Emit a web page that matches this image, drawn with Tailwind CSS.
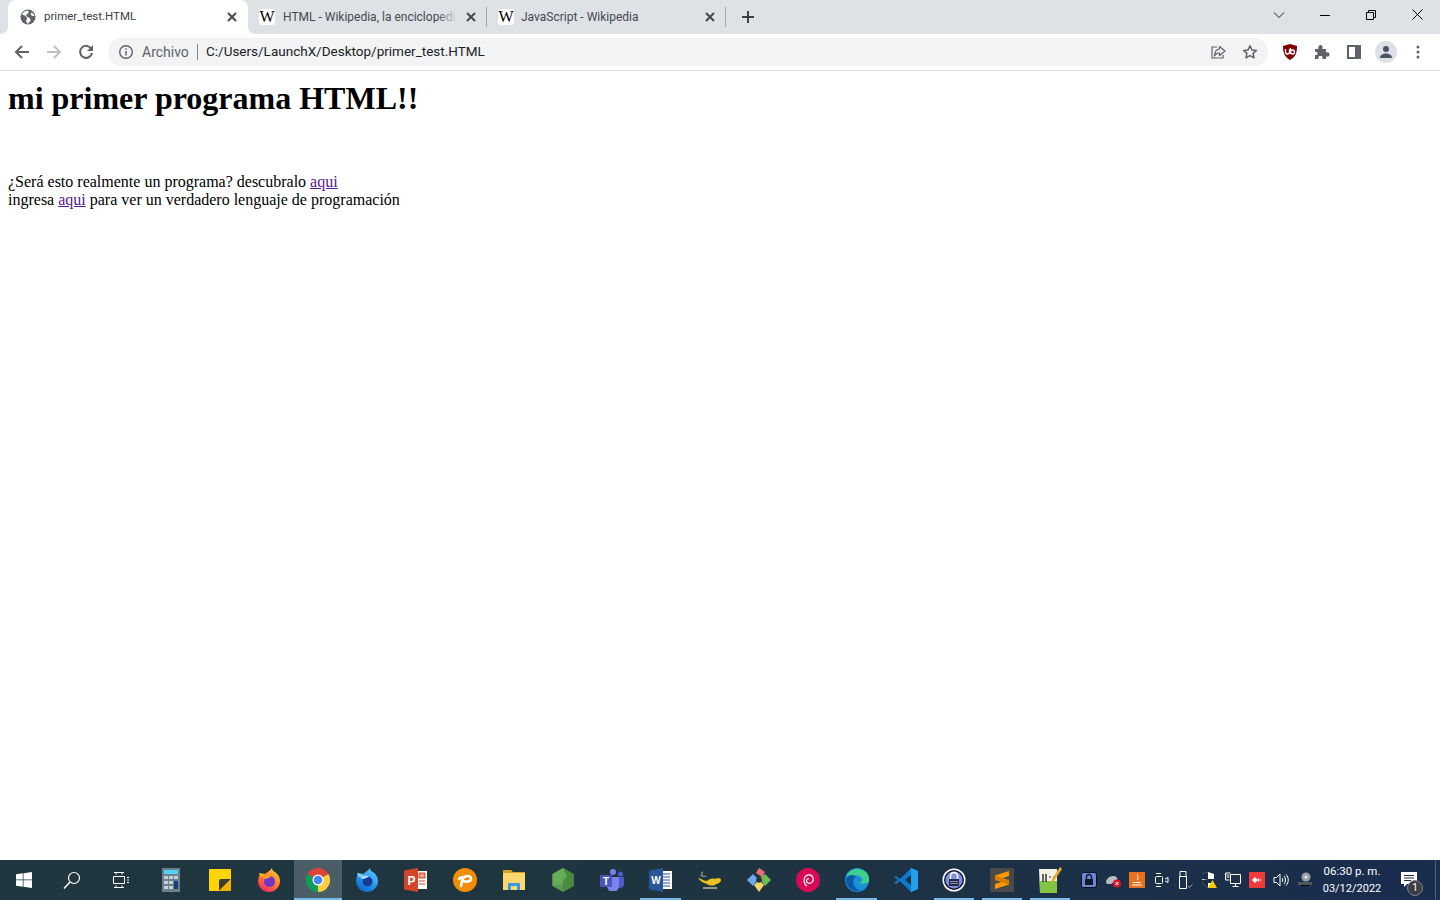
<!DOCTYPE html>
<html lang="es">
<head>
    <meta charset="UTF-8">
    <title>primer_test.HTML</title>
    <script src="https://cdn.jsdelivr.net/npm/@tailwindcss/browser@4"></script>
</head>
<body class="h-screen w-screen overflow-hidden flex flex-col bg-white font-['Roboto',sans-serif]">
    <!-- Tab strip -->
    <div class="h-[34px] shrink-0 bg-[#dee1e6] flex pl-2 text-[12px] leading-none">
        <div class="relative w-[240px] bg-white rounded-t-[8px] flex items-center pl-[12px] pr-[8px] text-[#3c4043]">
            <svg class="absolute -left-2 bottom-0" width="8" height="8"><path d="M8 0V8H0C5 8 8 5 8 0Z" fill="#fff"/></svg>
            <svg class="absolute -right-2 bottom-0" width="8" height="8"><path d="M0 0V8H8C3 8 0 5 0 0Z" fill="#fff"/></svg>
            <svg class="shrink-0" width="16" height="16" viewBox="0 0 16 16"><circle cx="8" cy="8" r="7.500" fill="#5f6368"/><path d="M2 5.500l3 1 2.500 3-1.500 1.500 1 3.500 1.200-.1 2.500-3-1-2.500-3-1.500-.5-2 2-1 .5-2.500C5.500 1 3 3 2 5.500ZM11.500 3.500l-1 2 2 1.500h2C14 5.500 13 4.300 11.500 3.500Z" fill="#fff"/></svg>
            <span class="ml-2 text-[11.5px]">primer_test.HTML</span>
            <svg class="ml-auto" width="16" height="16" viewBox="0 0 16 16"><path d="M4 4l8 8M12 4l-8 8" stroke="#45494d" stroke-width="2"/></svg>
        </div>
        <div class="relative w-[239px] flex items-center pl-[11px] pr-[8px] text-[#45494d]">
            <span class="w-4 h-4 bg-white rounded-[3px] shrink-0 flex items-center justify-center font-['Liberation_Serif',serif] text-[16px] text-black">W</span>
            <span class="relative ml-2 -mt-px w-[174px] overflow-hidden whitespace-nowrap">HTML - Wikipedia, la enciclopedia libre
                <span class="absolute right-0 top-0 h-full w-5 bg-linear-to-r from-[#dee1e6]/0 to-[#dee1e6]"></span>
            </span>
            <svg class="ml-auto" width="16" height="16" viewBox="0 0 16 16"><path d="M4 4l8 8M12 4l-8 8" stroke="#45494d" stroke-width="2"/></svg>
            <span class="absolute right-0 top-[7px] w-px h-[20px] bg-[#a3a6ab]"></span>
        </div>
        <div class="relative w-[239px] flex items-center pl-[11px] pr-[8px] text-[#45494d]">
            <span class="w-4 h-4 bg-white rounded-[3px] shrink-0 flex items-center justify-center font-['Liberation_Serif',serif] text-[16px] text-black">W</span>
            <span class="ml-[7px] -mt-px whitespace-nowrap">JavaScript - Wikipedia</span>
            <svg class="ml-auto" width="16" height="16" viewBox="0 0 16 16"><path d="M4 4l8 8M12 4l-8 8" stroke="#45494d" stroke-width="2"/></svg>
            <span class="absolute right-0 top-[7px] w-px h-[20px] bg-[#a3a6ab]"></span>
        </div>
        <div class="w-11 flex items-center justify-center">
            <svg width="16" height="16" viewBox="0 0 16 16"><path d="M8 2v12M2 8h12" stroke="#3c4043" stroke-width="2"/></svg>
        </div>
        <div class="ml-auto flex h-[29px]">
            <div class="w-[46px] flex items-center justify-center"><svg width="12" height="12" viewBox="0 0 12 12" fill="none"><path d="M1 3.500l5 5 5-5" stroke="#202124"/></svg></div>
            <div class="w-[46px] flex items-center justify-center"><svg width="10" height="10" viewBox="0 0 10 10"><path d="M0 5.500h10" stroke="#000"/></svg></div>
            <div class="w-[46px] flex items-center justify-center"><svg width="10" height="10" viewBox="0 0 10 10" fill="none"><path d="M.5 2.500h7v7h-7zM2.500 2.500v-2h7v7h-2" stroke="#000"/></svg></div>
            <div class="w-[46px] flex items-center justify-center"><svg width="11" height="11" viewBox="0 0 11 11"><path d="M.5.500l10 10M10.500.500l-10 10" stroke="#000"/></svg></div>
        </div>
    </div>

    <!-- Toolbar -->
    <div class="h-[37px] shrink-0 bg-white border-b border-[#dadce0] flex items-center px-[6px] pb-px">
        <div class="w-8 flex justify-center"><svg width="16" height="16" viewBox="0 0 16 16" fill="none"><path d="M15 8H2M8 2L2 8l6 6" stroke="#5f6368" stroke-width="2"/></svg></div>
        <div class="w-8 flex justify-center"><svg width="16" height="16" viewBox="0 0 16 16" fill="none"><path d="M1 8h13M8 2l6 6-6 6" stroke="#bdc1c6" stroke-width="2"/></svg></div>
        <div class="w-8 flex justify-center"><svg width="16" height="16" viewBox="0 0 16 16" fill="none"><path d="M13.400 5A6 6 0 1 0 14 9" stroke="#5f6368" stroke-width="2"/><path d="M15 1v6H9z" fill="#5f6368"/></svg></div>
        <div class="ml-[6px] h-7 flex-1 rounded-full bg-[#f1f3f4] flex items-center pl-[10px] pr-[10px] text-[14px] leading-none">
            <svg width="16" height="16" viewBox="0 0 16 16" fill="none"><circle cx="8" cy="8" r="6.300" stroke="#5f6368" stroke-width="1.400"/><path d="M8 7v4.500M8 4.300v1.500" stroke="#5f6368" stroke-width="1.500"/></svg>
            <span class="ml-2 w-[47px] text-[#5f6368]">Archivo</span>
            <span class="ml-2 w-px h-4 bg-[#80868b]"></span>
            <span class="ml-2 text-[13.5px] text-[#202124]">C:/Users/LaunchX/Desktop/primer_test.HTML</span>
            <svg class="ml-auto" width="16" height="16" viewBox="0 0 16 16" fill="none"><path d="M7 3H2v11h11v-3" stroke="#5f6368" stroke-width="1.200"/><path d="M9.500 2.500L15 7l-5.500 4.500V9C7 9 5.500 10 4.500 12c0-4 2-6.500 5-7z" stroke="#5f6368" stroke-width="1.200" stroke-linejoin="round"/></svg>
            <svg class="ml-4" width="16" height="16" viewBox="0 0 16 16" fill="none"><path d="M8 1.800l1.900 4.100 4.500.5-3.300 3 .9 4.400L8 11.600l-4 2.200.9-4.400-3.300-3 4.500-.5z" stroke="#5f6368" stroke-width="1.500" stroke-linejoin="round"/></svg>
        </div>
        <div class="ml-[6px] w-8 flex justify-center">
            <svg width="16" height="16" viewBox="0 0 16 16"><path d="M8 0l7 2c0 7-1.500 11-7 14C2.500 13 1 9 1 2z" fill="#800000"/><path d="M3.500 5v3a2 2 0 0 0 4 0V5" fill="none" stroke="#fff" stroke-width="1.300"/><circle cx="10.500" cy="8" r="2" fill="none" stroke="#fff" stroke-width="1.300"/><path d="M8.500 4v6" stroke="#fff" stroke-width="1.300"/></svg>
        </div>
        <div class="w-8 flex justify-center">
            <svg width="16" height="16" viewBox="0 0 16 16"><path d="M1 5h3.500C4 2.500 5 1 6.500 1S9 2.500 8.500 5H12v3.500c2.500-.5 3.500.5 3.500 2s-1 2.500-3.500 2V15H8.500c.5-2.500-.5-3-2-3s-2.500.5-2 3H1v-4c2 .5 2.500-.5 2.500-1.500S3 7.500 1 8z" fill="#5f6368"/></svg>
        </div>
        <div class="w-8 flex justify-center">
            <div class="w-[14px] h-[14px] border-2 border-r-[6px] border-[#5f6368] bg-white"></div>
        </div>
        <div class="w-8 flex justify-center">
            <div class="w-[22px] h-[22px] rounded-full bg-[#dee1e6] flex items-center justify-center">
                <svg width="14" height="14" viewBox="0 0 14 14"><circle cx="7" cy="4" r="3" fill="#4a5366"/><path d="M1 13c0-3 3-4.500 6-4.500s6 1.500 6 4.500z" fill="#4a5366"/></svg>
            </div>
        </div>
        <div class="w-8 flex justify-center">
            <svg width="4" height="14" viewBox="0 0 4 14" fill="#5f6368"><circle cx="2" cy="2" r="1.500"/><circle cx="2" cy="7" r="1.500"/><circle cx="2" cy="12" r="1.500"/></svg>
        </div>
    </div>

    <!-- Page -->
    <main class="flex-1 pl-[8px] pt-[9px] font-['Liberation_Serif',serif] text-black">
        <h1 class="text-[32px] leading-[37px] font-bold">mi primer programa HTML!!</h1>
        <p class="mt-[56px] text-[16px] leading-[18px]">¿Será esto realmente un programa? descubralo <a class="underline text-[#551a8b]" href="#">aqui</a><br>ingresa <a class="underline text-[#551a8b]" href="#">aqui</a> para ver un verdadero lenguaje de programación</p>
    </main>

    <!-- Taskbar -->
    <div class="h-10 shrink-0 bg-linear-to-r from-[#20373f] via-[#1e3440] to-[#1a2c4f] flex items-stretch text-white [&>*]:shrink-0">
        <div class="w-12 flex items-center justify-center">
            <svg width="16" height="16" viewBox="0 0 16 16" fill="#fff"><path d="M0 2.300l6.800-1v6.200H0zM7.500 1.200L16 0v7.500H7.500zM0 8.300h6.800v6.400L0 13.700zM7.500 8.300H16V16l-8.500-1.200z"/></svg>
        </div>
        <div class="w-12 flex items-center justify-center">
            <svg width="18" height="18" viewBox="0 0 18 18" fill="none" stroke="#fff" stroke-width="1.200"><circle cx="11" cy="7" r="5.500"/><path d="M7 11l-6 6.500" stroke-width="1.500"/></svg>
        </div>
        <div class="w-[50px] flex items-center justify-center">
            <svg width="16" height="16" viewBox="0 0 16 16" fill="none" stroke="#fff"><path d="M1 .500h10M1 15.500h10M.5 4.500h11v7H.5zM14 5.500h2M14 8h2M14 10.500h2M3 .5V2.500M9 .5V2.500M3 13.500v2M9 13.500v2"/></svg>
        </div>
        <!-- calculator -->
        <div class="w-[49px] flex items-center justify-center">
            <svg width="18" height="24" viewBox="0 0 18 24"><rect width="18" height="24" fill="#6d7f8c"/><rect x="2" y="2" width="14" height="4" fill="#4fd3f0"/><g fill="#c7d0d6"><rect x="2" y="8" width="4" height="3"/><rect x="7" y="8" width="4" height="3"/><rect x="2" y="13" width="4" height="3"/><rect x="7" y="13" width="4" height="3"/><rect x="2" y="18" width="4" height="3"/><rect x="7" y="18" width="4" height="3"/><rect x="12" y="8" width="4" height="3"/></g><rect x="12" y="13" width="4" height="8" fill="#173f7a"/></svg>
        </div>
        <!-- sticky notes -->
        <div class="w-[49px] flex items-center justify-center">
            <svg width="22" height="22" viewBox="0 0 22 22"><rect width="22" height="22" fill="#ffd400"/><path d="M22 10L10 22V12q0-2 2-2z" fill="#3c3a34"/><path d="M22 10v12H10z" fill="#f3b200"/></svg>
        </div>
        <!-- firefox -->
        <div class="w-[49px] flex items-center justify-center">
            <svg width="24" height="24" viewBox="0 0 24 24">
                <defs><linearGradient id="ff" x1="0.800" y1="0" x2="0.200" y2="1"><stop offset="0" stop-color="#ffcf2e"/><stop offset=".5" stop-color="#ff7a2c"/><stop offset="1" stop-color="#f5246e"/></linearGradient></defs>
                <path d="M15 0c0 2 1 3 3 4 4 3 5 6 5 9a11 11 0 0 1-22 0c0-2 .500-4 1.500-6L3 9c1-2 3-3 5-3 2-2 5-3 7-6z" fill="url(#ff)"/>
                <path d="M2 5l6 1c-1 2-3 3-5 3z" fill="#ffb01f"/>
                <circle cx="12.500" cy="13.500" r="5.500" fill="#6f35c4"/>
                <path d="M5 9c3-2 7-2 9 0-2 1-4 1-5 2-2 0-3-1-4-2z" fill="#ff9a2c"/>
            </svg>
        </div>
        <!-- chrome -->
        <div class="relative ml-px w-12 bg-white/20 flex items-center justify-center border-b-2 border-[#76b9ed]">
            <svg class="mt-[2px]" width="24" height="24" viewBox="0 0 24 24"><path d="M12 12L1.600 6A12 12 0 0 1 22.400 6z" fill="#db4437"/><path d="M12 12L22.400 6A12 12 0 0 1 12 24z" fill="#ffcd40"/><path d="M12 12L12 24A12 12 0 0 1 1.600 6z" fill="#0f9d58"/><circle cx="12" cy="12" r="5.500" fill="#fff"/><circle cx="12" cy="12" r="4.300" fill="#4285f4"/></svg>
        </div>
        <!-- thunderbird -->
        <div class="w-[49px] flex items-center justify-center">
            <svg width="24" height="24" viewBox="0 0 24 24">
                <defs><linearGradient id="tb" x1="0.800" y1="0" x2="0.200" y2="1"><stop offset="0" stop-color="#5cc8ff"/><stop offset=".6" stop-color="#1f8fe8"/><stop offset="1" stop-color="#0f5fc4"/></linearGradient></defs>
                <path d="M15 0c0 2 1 3 3 4 4 3 5 6 5 9a11 11 0 0 1-22 0c0-2 .500-4 1.500-6L3 9c1-2 3-3 5-3 2-2 5-3 7-6z" fill="url(#tb)"/>
                <path d="M2 5l6 1c-1 2-3 3-5 3z" fill="#7fd4ff"/>
                <circle cx="12.500" cy="13.500" r="5" fill="#173a94"/>
                <path d="M5 9c3-2 7-2 9 0-2 1-4 1-5 2-2 0-3-1-4-2z" fill="#a9e0ff"/>
            </svg>
        </div>
        <!-- powerpoint -->
        <div class="w-[49px] flex items-center justify-center">
            <svg width="24" height="24" viewBox="0 0 24 24"><rect x="9" y="3" width="14" height="18" fill="#fff"/><path d="M15 5h6v5h-6zM15 13h6M15 16h6" stroke="#d2452a" fill="#f0a08a"/><path d="M0 2.500L14 0v24L0 21.500z" fill="#d2452a"/><text x="3.500" y="16.500" font-family="Liberation Sans" font-weight="700" font-size="12" fill="#fff">P</text></svg>
        </div>
        <!-- orange round icon -->
        <div class="w-[49px] flex items-center justify-center">
            <svg width="24" height="24" viewBox="0 0 24 24" fill="none"><circle cx="12" cy="12" r="12" fill="#f28c00"/><path d="M8 18l1.500-7c2-4 8.500-4 8.500-.5S13 14 10 13M6 11c1-1.500 2-2 3.500-2" stroke="#fff" stroke-width="2.600" stroke-linecap="round"/></svg>
        </div>
        <!-- explorer -->
        <div class="w-[49px] flex items-center justify-center">
            <svg width="22" height="20" viewBox="0 0 22 20"><path d="M0 0h8l2 2h12v4H0z" fill="#d9a021"/><rect y="3" width="22" height="17" fill="#fcd76e"/><path d="M5 20v-7h12v7h-3v-4H8v4z" fill="#3b9ae0"/></svg>
        </div>
        <!-- node hexagon -->
        <div class="w-[49px] flex items-center justify-center">
            <svg width="22" height="24" viewBox="0 0 22 24"><path d="M11 0l10.500 6v12L11 24 .5 18V6z" fill="#5a9a4c"/><path d="M11 0l10.500 6v12L11 24z" fill="#4a8a3e"/><path d="M.5 6L11 0l4 8-6 8-8.500 2z" fill="#66ad58"/></svg>
        </div>
        <!-- teams -->
        <div class="w-[49px] flex items-center justify-center">
            <svg width="24" height="22" viewBox="0 0 24 22"><circle cx="13" cy="3" r="3" fill="#7b83eb"/><circle cx="20.500" cy="5" r="2.500" fill="#5059c9"/><path d="M16 8h8v7a4 4 0 0 1-8 0z" fill="#5059c9"/><path d="M7 8h12v9a5 5 0 0 1-12 0z" fill="#7b83eb"/><rect y="6" width="12" height="12" rx="1" fill="#4b53bc"/><text x="6" y="15.500" text-anchor="middle" font-family="Liberation Sans" font-weight="700" font-size="10" fill="#fff">T</text></svg>
        </div>
        <!-- word -->
        <div class="w-[49px] flex items-center justify-center relative">
            <svg width="24" height="24" viewBox="0 0 24 24"><rect x="9" y="3" width="14" height="18" fill="#fff"/><path d="M14 6h7M14 9h7M14 12h7M14 15h7M14 18h7" stroke="#2a5699"/><path d="M0 2.500L14 0v24L0 21.500z" fill="#2a5699"/><text x="7" y="16" text-anchor="middle" font-family="Liberation Sans" font-weight="700" font-size="10" fill="#fff">W</text></svg>
            <span class="absolute bottom-0 left-1 right-1 h-[2px] bg-[#76b9ed]"></span>
        </div>
        <!-- lamp -->
        <div class="w-[49px] flex items-center justify-center">
            <svg width="24" height="20" viewBox="0 0 24 20" fill="none"><path d="M5 2c-3 1 0 3-2 4 3 0 5 0 5 1" stroke="#8d8a7c" stroke-width="1.500"/><path d="M0 8c3 0 5 3 9 3 2-2 5-3 8-2 3-2 6-1 6 1s-3 4-5 4c-1 2-7 2-9 0C5 13 2 11 0 8z" fill="#e8c21e"/><path d="M5 18h14" stroke="#bfb9a4" stroke-width="1.500"/></svg>
        </div>
        <!-- diamonds -->
        <div class="w-[49px] flex items-center justify-center">
            <svg width="24" height="24" viewBox="0 0 24 24"><path d="M12 0l6 4-3 5-6-4z" fill="#e76f75"/><path d="M18 6l6 6-6 6-3-4-1-5z" fill="#6fbd52"/><path d="M6 6l4 4-1 4-3 4-6-6z" fill="#6ba8ec"/><path d="M7 17l3-3h4l3 3-5 7z" fill="#f1d76c"/><circle cx="12" cy="12" r="2" fill="none" stroke="#333" stroke-width="1.500"/></svg>
        </div>
        <!-- debian -->
        <div class="w-[49px] flex items-center justify-center">
            <svg width="24" height="24" viewBox="0 0 24 24" fill="none"><circle cx="12" cy="12" r="12" fill="#d70a53"/><path d="M11 18c-3-2-4-6-2-9s7-3 8 1-2 6-5 5-1-5 1-4" stroke="#fff" stroke-width="1.200"/></svg>
        </div>
        <!-- edge -->
        <div class="w-[49px] flex items-center justify-center relative">
            <svg width="24" height="24" viewBox="0 0 24 24"><circle cx="12" cy="12" r="12" fill="#1b8fd6"/><path d="M2 7C5 0 15-1 21 4c4 4 3 9 3 10-3 2-7 2-10 1 3-1 4-3 3-5-2-3-8-4-11-1C4 10 3 11 2 13z" fill="#3ccf90"/><path d="M1 12C2 6 9 6 11 9c-3 1-4 6-1 10 2 3 5 4 8 3-8 4-17-2-17-10z" fill="#0c59a4"/></svg>
            <span class="absolute bottom-0 left-1 right-1 h-[2px] bg-[#76b9ed]"></span>
        </div>
        <!-- vscode -->
        <div class="w-[49px] flex items-center justify-center">
            <svg width="24" height="24" viewBox="0 0 24 24"><path d="M17 0l7 3v18l-7 3L6 13l-4 3-2-1.500L4 12 0 9.500 2 8l4 3z" fill="#0a7ccc"/><path d="M17 0l7 3v18l-7 3z" fill="#24a0ec"/><path d="M17 7l-6 5 6 5z" fill="#1d3144"/></svg>
        </div>
        <!-- keepass -->
        <div class="w-[48px] flex items-center justify-center relative">
            <svg width="24" height="24" viewBox="0 0 24 24"><circle cx="12" cy="12" r="11.500" fill="#fff"/><circle cx="12" cy="12" r="10" fill="#14182e"/><circle cx="12" cy="12" r="8.500" fill="#7f90dc"/><path d="M8.500 11V8a3.500 3.500 0 0 1 7 0v3" fill="none" stroke="#fff" stroke-width="1.500"/><rect x="7" y="11" width="10" height="7" fill="#232748"/><path d="M8 13.500h8M8 15.500h8" stroke="#aab" stroke-width=".8"/></svg>
            <span class="absolute bottom-0 left-1 right-1 h-[2px] bg-[#76b9ed]"></span>
        </div>
        <!-- sublime -->
        <div class="w-[48px] flex items-center justify-center relative">
            <svg width="24" height="24" viewBox="0 0 24 24"><rect width="24" height="24" rx="1" fill="#4a4a4a"/><path d="M19 3v5L5 12.500v-5zM19 11.500v5L5 21v-5z" fill="#ff9800"/><path d="M5 7.500l14 4.500v4.500L5 12z" fill="#d97e00"/></svg>
            <span class="absolute bottom-0 left-1 right-1 h-[2px] bg-[#76b9ed]"></span>
        </div>
        <!-- notepad -->
        <div class="w-[48px] flex items-center justify-center relative">
            <svg width="24" height="26" viewBox="0 0 24 26"><path d="M1 2h18v24H2z" fill="#f3f3e4"/><path d="M2 14h17v12H2z" fill="#82c341"/><path d="M5 7v8M8 7v8" stroke="#333" stroke-width="1.500"/><path d="M11 10h2M15 10h1" stroke="#333"/><path d="M22 0l2 2-8 12-3 2 1-4z" fill="#e8a92c"/></svg>
            <span class="absolute bottom-0 left-1 right-1 h-[2px] bg-[#76b9ed]"></span>
        </div>

        <!-- Tray -->
        <div class="ml-[3px] flex items-center">
            <div class="w-6 flex justify-center"><svg width="16" height="16" viewBox="0 0 16 16"><rect x=".5" y=".5" width="15" height="15" rx="2" fill="#6f86d6" stroke="#0b0f22"/><path d="M5.500 7V5a2.500 2.500 0 0 1 5 0v2" fill="none" stroke="#14182e" stroke-width="1.300"/><rect x="4" y="7" width="8" height="6" fill="#14182e"/></svg></div>
            <div class="w-6 flex justify-center"><svg width="16" height="16" viewBox="0 0 16 16"><path d="M1 10c0-3 4-6 7-6s5 2 4 4l-6 4H3c-1 0-2-1-2-2z" fill="#b9bec4"/><circle cx="12" cy="11.500" r="4" fill="#d7152a"/><path d="M10.500 10l3 3M13.500 10l-3 3" stroke="#fff"/></svg></div>
            <div class="w-6 flex justify-center"><svg width="16" height="16" viewBox="0 0 16 16" fill="none"><rect width="16" height="16" fill="#e8711c"/><path d="M3 13h10M4 10.500h8M9 2C7 4 11 5 8 8" stroke="#fff"/></svg></div>
            <div class="w-6 flex justify-center"><svg width="16" height="16" viewBox="0 0 16 16" fill="none" stroke="#fff"><rect x="2.500" y="4.500" width="7" height="7" rx="1"/><path d="M12 7l3-1.500v5L12 9M3 1.500h5M3 14.500h5"/></svg></div>
            <div class="w-6 flex justify-center"><svg width="16" height="18" viewBox="0 0 16 18" fill="none" stroke="#fff"><path d="M3 .5h6v5H3zM2.500 5.500h7v12h-7z"/><path d="M11 15l1.500 1.500 3-3" stroke="#aab"/></svg></div>
            <div class="w-6 flex justify-center"><svg width="16" height="16" viewBox="0 0 16 16"><path d="M7 0l6 2v6c0 4-3 6-6 8-3-2-6-4-6-8V2z" fill="#fff"/><path d="M7 0v7H1V2zM7 7h6v1c0 1 0 2-.5 3H7v5c-3-2-6-4-6-8z" fill="#1b2a45"/><path d="M11.500 8l4.500 8H7z" fill="#ffcb00"/></svg></div>
            <div class="w-6 flex justify-center"><svg width="16" height="16" viewBox="0 0 16 16" fill="none" stroke="#fff"><path d="M5.500 2.500h10v9h-10zM.5 1h5M.5 1v7h4M10.500 11.500v3M7.500 14.500h6M1.500 3h3M1.500 5h3"/></svg></div>
            <div class="w-6 flex justify-center"><svg width="16" height="16" viewBox="0 0 16 16"><rect width="16" height="16" fill="#ee3b3b"/><path d="M3 8l3-3 3 3-3 3zM9 6l2 2-2 2zM11 7l1 1-1 1z" fill="#fff"/></svg></div>
            <div class="w-6 flex justify-center"><svg width="16" height="16" viewBox="0 0 16 16" fill="none" stroke="#fff"><path d="M1 5.500h2.500L7 2v12l-3.500-3.500H1zM9 6c1 1 1 3 0 4M11 4c2 2 2 6 0 8M13 2.500c3 3 3 8 0 11"/></svg></div>
            <div class="w-6 flex justify-center"><svg width="16" height="16" viewBox="0 0 16 16"><circle cx="9" cy="5" r="4.500" fill="#9aa0a4"/><circle cx="9" cy="5" r="1.500" fill="#e6e8ea"/><rect x="1" y="10" width="14" height="3" fill="#51565b"/><rect x="4" y="13" width="8" height="1" fill="#000"/></svg></div>
        </div>
        <div class="w-[70px] flex flex-col items-center justify-center leading-[17px] text-white">
            <span class="text-[11.5px]">06:30 p. m.</span>
            <span class="text-[11px]">03/12/2022</span>
        </div>
        <div class="relative w-[43px] flex items-center justify-center">
            <svg class="-mt-[2px]" width="16" height="15" viewBox="0 0 16 15"><path d="M0 0h16v12H6l-3 3v-3H0z" fill="#fff"/><path d="M3 3.500h10M3 6h10M3 8.500h7" stroke="#1b2a45"/></svg>
            <span class="absolute left-[20px] top-[20px] w-4 h-4 rounded-full bg-[#3b3f44] border border-[#808488] text-[10px] leading-none flex items-center justify-center">1</span>
        </div>
        <div class="ml-auto w-[5px] border-l border-[#4f6070]"></div>
    </div>
</body>
</html>
